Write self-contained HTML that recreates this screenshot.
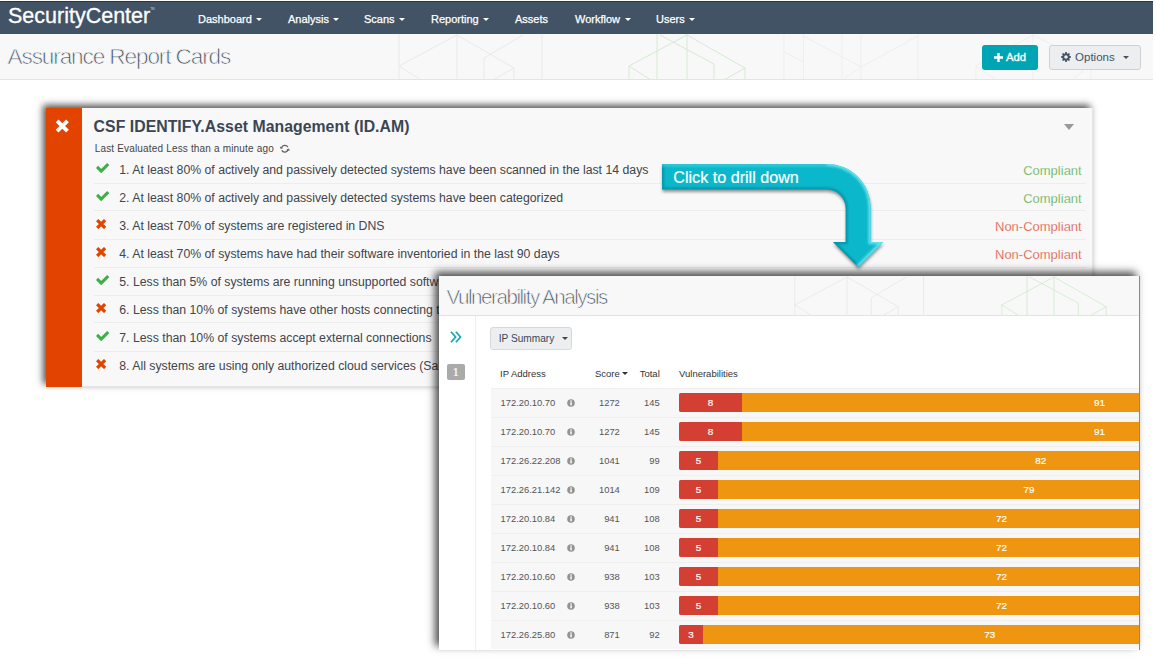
<!DOCTYPE html>
<html><head><meta charset="utf-8"><title>SecurityCenter - Assurance Report Cards</title>
<style>
*{box-sizing:border-box;margin:0;padding:0}
html,body{width:1156px;height:659px;overflow:hidden;background:#fff}
body{position:relative;font-family:"Liberation Sans",Arial,sans-serif;color:#3c4650}
.abs{position:absolute}
#nav{left:0;top:1px;width:1153px;height:33px;background:#425366;border-top:1px solid #2a3644}
#logo{left:8px;top:0.3px;font-size:21.5px;line-height:33px;color:#fff;letter-spacing:0;white-space:nowrap;-webkit-text-stroke:0.3px #fff}
.ni{top:1px;height:33px;line-height:36.2px;font-size:11px;color:#fff;white-space:nowrap;-webkit-text-stroke:0.25px #fff}
.car{display:inline-block;width:0;height:0;border-left:3.2px solid transparent;border-right:3.2px solid transparent;border-top:3.4px solid currentColor;vertical-align:middle;margin-left:4.5px;position:relative;top:-0.5px}
#hdr{left:0;top:34px;width:1153px;height:46px;background:#f8f8f8;border-bottom:1px solid #e4e4e4}
.thin{color:#425363;white-space:nowrap}
#title{left:7.5px;top:34.3px;line-height:45px;font-size:22.6px;-webkit-text-stroke:0.75px #f8f8f8;letter-spacing:-1.12px}
#add{left:982px;top:45px;width:56px;height:25px;background:#00a5b5;border-radius:3px;color:#fff;font-size:11.3px;-webkit-text-stroke:0.35px #fff;line-height:25px;text-align:center}
#opt{left:1049px;top:45px;width:92px;height:25px;background:#eceef0;border:1px solid #cfd2d5;border-radius:3px;color:#425363;font-size:11.5px;line-height:23px;text-align:center;white-space:nowrap}

#card{left:46px;top:108px;width:1047px;height:279px;background:#f8f8f8;box-shadow:-3px -3px 7px rgba(0,0,0,.68);border-right:1px solid #e6e6e6;border-bottom:1px solid #e6e6e6}
#strip{left:46px;top:108px;width:36px;height:279px;background:#e24400}
#ctitle{left:93.6px;top:118.9px;font-size:15.8px;line-height:15.8px;letter-spacing:0.045px;font-weight:bold;color:#3a4654;white-space:nowrap}
#csub{left:94.7px;top:144px;font-size:10px;line-height:10px;letter-spacing:0.17px;color:#444;white-space:nowrap}
.rt{left:119.3px;font-size:12.27px;line-height:12px;color:#41454c;white-space:nowrap}
.st{right:74.3px;font-size:13px;line-height:13px;white-space:nowrap;-webkit-text-stroke:0.25px #f8f8f8}
.ok{color:#4fa83d}.bad{color:#d9442f}
.sep{left:94px;width:992px;height:1px;background:#ededed}

#vp{left:439px;top:276px;width:701px;height:374px;background:#fff;box-shadow:-4px -4px 8px rgba(0,0,0,.7);border-right:1px solid #8a8a8a;overflow:hidden}
#vh{left:0;top:0;width:700px;height:40px;background:#f8f8f8;border-bottom:1px solid #e2e2e2}
#vt{left:7.5px;top:1.1px;font-size:20.6px;line-height:40px;-webkit-text-stroke:0.7px #f8f8f8;letter-spacing:-1.47px}
#vs{left:0;top:40px;width:37px;height:340px;border-right:1px solid #eee;background:#fff}
#ips{left:51px;top:51px;width:82px;height:22.6px;background:#eceef0;border:1px solid #d6d9dc;border-radius:3px;font-size:10.15px;line-height:21.6px;color:#3a4654;padding-left:7.7px;white-space:nowrap}
.th{top:93px;font-size:9.5px;line-height:10px;color:#333;white-space:nowrap}
.vr{left:52px;width:660px;height:29px;background:#f7f7f7;border-top:1px solid #efefef}
.vc{font-size:9.4px;line-height:10px;color:#555;white-space:nowrap}
.bar{left:240px;height:19px;width:480px;background:#ee9611;border-radius:2px 0 0 2px}
.red{left:240px;height:19px;background:#d43f34;border-radius:2px 0 0 2px}
.bn{font-size:9.9px;line-height:10px;color:#fff;-webkit-text-stroke:0.18px #fff;width:20px;margin-left:-10px;text-align:center}
</style></head><body>
<div id="nav" class="abs"></div>
<div id="logo" class="abs">SecurityCenter<span style="font-size:3px;position:relative;top:-13px;letter-spacing:0;-webkit-text-stroke:0;opacity:.7">TM</span></div>
<div class="abs ni" style="left:198px">Dashboard<span class="car"></span></div>
<div class="abs ni" style="left:288px">Analysis<span class="car"></span></div>
<div class="abs ni" style="left:364px">Scans<span class="car"></span></div>
<div class="abs ni" style="left:431px">Reporting<span class="car"></span></div>
<div class="abs ni" style="left:515px">Assets</div>
<div class="abs ni" style="left:575px">Workflow<span class="car"></span></div>
<div class="abs ni" style="left:656px">Users<span class="car"></span></div>
<div id="hdr" class="abs"></div>
<svg class="abs" style="left:0;top:34px" width="1153" height="45" viewBox="0 34 1153 45"><g fill="none" stroke-width="1">
<g stroke="#e9e9e9"><path d="M399 34 V80 M457 34 V80 M484 58 V80 M514 68 V80 M542 34 V80"/><path d="M457 35 L399 66 L421 80 M457 35 L514 68 L493 80 M484 58 L523 35"/></g>
<g stroke="#d3ecd0"><path d="M629 66 V80 M657 34 V80 M687 34 V80 M714 64 V80 M745 68 V80"/><path d="M687 35 L629 66 L651 80 M687 35 L745 68 L724 80 M660 35 L714 64"/></g>
<g stroke="#efefef"><path d="M784 34 V80 M803.5 34 V80 M842 34 V80 M861 34 V80 M918 34 V80 M976 66 V80 M1033 34 V80 M1091 64 V80"/><path d="M784 52 L803.5 62 M803.5 36 L861 67 L842 80 M918 36 L861 67 M1033 35 L976 66 L996 80 M1033 35 L1091 64 L1072 80"/></g>
</g></svg>
<div id="title" class="abs thin">Assurance Report Cards</div>
<div id="add" class="abs"><svg width="9" height="9" viewBox="0 0 9 9" style="vertical-align:-0.8px;margin-right:3px"><path d="M0 4.5 H9 M4.5 0 V9" stroke="#fff" stroke-width="2.4"/></svg>Add</div>
<div id="opt" class="abs"><svg width="10" height="10" viewBox="0 0 10 10" style="vertical-align:-1.2px;margin-right:4px"><path fill-rule="evenodd" fill="#425363" d="M8.59 4.10 L9.94 4.22 L9.94 5.78 L8.59 5.90 L8.17 6.90 L9.05 7.94 L7.94 9.05 L6.90 8.17 L5.90 8.59 L5.78 9.94 L4.22 9.94 L4.10 8.59 L3.10 8.17 L2.06 9.05 L0.95 7.94 L1.83 6.90 L1.41 5.90 L0.06 5.78 L0.06 4.22 L1.41 4.10 L1.83 3.10 L0.95 2.06 L2.06 0.95 L3.10 1.83 L4.10 1.41 L4.22 0.06 L5.78 0.06 L5.90 1.41 L6.90 1.83 L7.94 0.95 L9.05 2.06 L8.17 3.10 Z M5 3.2 A1.8 1.8 0 1 0 5 6.8 A1.8 1.8 0 1 0 5 3.2 Z"/></svg>Options <span class="car" style="margin-left:5px"></span></div>
<div id="card" class="abs"></div>
<div id="strip" class="abs"></div>
<svg class="abs" style="left:55.2px;top:119.3px" width="14.6" height="14" viewBox="0 0 14.6 14"><path d="M2.1 1.9 L12.5 12.1 M12.5 1.9 L2.1 12.1" stroke="#fff" stroke-width="3.9" stroke-linecap="butt"/></svg>
<div id="ctitle" class="abs">CSF IDENTIFY.Asset Management (ID.AM)</div>
<div id="csub" class="abs">Last Evaluated Less than a minute ago</div>
<svg class="abs" style="left:280.3px;top:143.8px" width="9.6" height="9.6" viewBox="0 0 10 10" transform="rotate(-15)"><path d="M8.5 4.2 A3.6 3.6 0 0 0 2 3.2 M1.5 5.8 A3.6 3.6 0 0 0 8 6.8" fill="none" stroke="#606060" stroke-width="1.3"/><path d="M0.6 1.4 L0.8 4.2 L3.6 3.8 Z M9.4 8.6 L9.2 5.8 L6.4 6.2 Z" fill="#606060"/></svg>
<div class="abs" style="left:1064px;top:124px;width:0;height:0;border-left:5px solid transparent;border-right:5px solid transparent;border-top:6px solid #999"></div>
<svg class="abs" style="left:95.5px;top:162.90px" width="13.3" height="10.3" viewBox="0 0 13.3 10.3"><path d="M1.06 3.95 L5.22 8.12 L12.24 1.08" fill="none" stroke="#3fae49" stroke-width="3.05"/></svg>
<div class="abs rt" style="top:163.64px">1. At least 80% of actively and passively detected systems have been scanned in the last 14 days</div>
<div class="abs st ok" style="top:163.80px">Compliant</div>
<div class="abs sep" style="top:182.50px"></div>
<svg class="abs" style="left:95.5px;top:190.90px" width="13.3" height="10.3" viewBox="0 0 13.3 10.3"><path d="M1.06 3.95 L5.22 8.12 L12.24 1.08" fill="none" stroke="#3fae49" stroke-width="3.05"/></svg>
<div class="abs rt" style="top:191.64px">2. At least 80% of actively and passively detected systems have been categorized</div>
<div class="abs st ok" style="top:191.80px">Compliant</div>
<div class="abs sep" style="top:210.10px"></div>
<svg class="abs" style="left:95.5px;top:219.15px" width="10.3" height="10.1" viewBox="0 0 10.3 10.1"><path d="M1.15 1.15 L9.15 8.95 M9.15 1.15 L1.15 8.95" fill="none" stroke="#e24400" stroke-width="3.25"/></svg>
<div class="abs rt" style="top:219.64px">3. At least 70% of systems are registered in DNS</div>
<div class="abs st bad" style="top:219.80px">Non-Compliant</div>
<div class="abs sep" style="top:238.50px"></div>
<svg class="abs" style="left:95.5px;top:247.15px" width="10.3" height="10.1" viewBox="0 0 10.3 10.1"><path d="M1.15 1.15 L9.15 8.95 M9.15 1.15 L1.15 8.95" fill="none" stroke="#e24400" stroke-width="3.25"/></svg>
<div class="abs rt" style="top:247.64px">4. At least 70% of systems have had their software inventoried in the last 90 days</div>
<div class="abs st bad" style="top:247.80px">Non-Compliant</div>
<div class="abs sep" style="top:266.70px"></div>
<svg class="abs" style="left:95.5px;top:274.90px" width="13.3" height="10.3" viewBox="0 0 13.3 10.3"><path d="M1.06 3.95 L5.22 8.12 L12.24 1.08" fill="none" stroke="#3fae49" stroke-width="3.05"/></svg>
<div class="abs rt" style="top:275.64px">5. Less than 5% of systems are running unsupported software</div>
<div class="abs st ok" style="top:275.80px">Compliant</div>
<div class="abs sep" style="top:294.70px"></div>
<svg class="abs" style="left:95.5px;top:303.15px" width="10.3" height="10.1" viewBox="0 0 10.3 10.1"><path d="M1.15 1.15 L9.15 8.95 M9.15 1.15 L1.15 8.95" fill="none" stroke="#e24400" stroke-width="3.25"/></svg>
<div class="abs rt" style="top:303.64px">6. Less than 10% of systems have other hosts connecting to them</div>
<div class="abs st bad" style="top:303.80px">Non-Compliant</div>
<div class="abs sep" style="top:322.10px"></div>
<svg class="abs" style="left:95.5px;top:330.90px" width="13.3" height="10.3" viewBox="0 0 13.3 10.3"><path d="M1.06 3.95 L5.22 8.12 L12.24 1.08" fill="none" stroke="#3fae49" stroke-width="3.05"/></svg>
<div class="abs rt" style="top:331.64px">7. Less than 10% of systems accept external connections</div>
<div class="abs st ok" style="top:331.80px">Compliant</div>
<div class="abs sep" style="top:350.70px"></div>
<svg class="abs" style="left:95.5px;top:359.15px" width="10.3" height="10.1" viewBox="0 0 10.3 10.1"><path d="M1.15 1.15 L9.15 8.95 M9.15 1.15 L1.15 8.95" fill="none" stroke="#e24400" stroke-width="3.25"/></svg>
<div class="abs rt" style="top:359.64px">8. All systems are using only authorized cloud services (Salesforce, Dropbox)</div>
<div class="abs st bad" style="top:359.80px">Non-Compliant</div>
<svg class="abs" style="left:640px;top:150px" width="270" height="130" viewBox="640 150 270 130">
<defs><filter id="as" x="-10%" y="-10%" width="120%" height="130%"><feGaussianBlur stdDeviation="1.4"/></filter>
<filter id="ab" x="-10%" y="-10%" width="120%" height="120%"><feGaussianBlur stdDeviation="0.8"/></filter>
<clipPath id="ac"><path d="M662 164 H827 A43.6 43.6 0 0 1 870.6 207.6 V242 H883 L858 267 L833 242 H845.7 V208.4 A18.8 18.8 0 0 0 827 189.6 H662 Z"/></clipPath></defs>
<path d="M662 164 H827 A43.6 43.6 0 0 1 870.6 207.6 V242 H883 L858 267 L833 242 H845.7 V208.4 A18.8 18.8 0 0 0 827 189.6 H662 Z" transform="translate(0.5,2.5)" fill="rgba(0,0,0,.4)" filter="url(#as)"/>
<path d="M662 164 H827 A43.6 43.6 0 0 1 870.6 207.6 V242 H883 L858 267 L833 242 H845.7 V208.4 A18.8 18.8 0 0 0 827 189.6 H662 Z" fill="#0bb8cb"/>
<g clip-path="url(#ac)" filter="url(#ab)" fill="none">
<path d="M662 164 H827 A43.6 43.6 0 0 1 870.6 207.6 V242 H883 L858 267 L833 242 H845.7 V208.4 A18.8 18.8 0 0 0 827 189.6 H662 Z" stroke="#068fa2" stroke-width="4.5" stroke-opacity=".75"/>
<path d="M662 164 H827 A43.6 43.6 0 0 1 870.6 207.6 V242 H883 L858 267" stroke="#6ff0fa" stroke-width="4.5" stroke-opacity=".85"/>
<path d="M662 164 H827" stroke="#0bb8cb" stroke-width="4" stroke-opacity=".6"/>
</g>
<text x="673.3" y="182.8" font-family="'Liberation Sans',Arial,sans-serif" font-size="17" fill="#fff" stroke="#fff" stroke-width="0.2" textLength="125.5" lengthAdjust="spacingAndGlyphs">Click to drill down</text>
</svg>
<div id="vp" class="abs">
<div id="vh" class="abs"></div>
<svg class="abs" style="left:0;top:0" width="700" height="40" viewBox="0 0 700 40"><g transform="translate(-3.3,-30.5) scale(0.9)"><g fill="none" stroke-width="1">
<g stroke="#e9e9e9"><path d="M399 34 V80 M457 34 V80 M484 58 V80 M514 68 V80 M542 34 V80"/><path d="M457 35 L399 66 L421 80 M457 35 L514 68 L493 80 M484 58 L523 35"/></g>
<g stroke="#d3ecd0"><path d="M629 66 V80 M657 34 V80 M687 34 V80 M714 64 V80 M745 68 V80"/><path d="M687 35 L629 66 L651 80 M687 35 L745 68 L724 80 M660 35 L714 64"/></g>
<g stroke="#efefef"><path d="M784 34 V80 M803.5 34 V80 M842 34 V80 M861 34 V80 M918 34 V80 M976 66 V80 M1033 34 V80 M1091 64 V80"/><path d="M784 52 L803.5 62 M803.5 36 L861 67 L842 80 M918 36 L861 67 M1033 35 L976 66 L996 80 M1033 35 L1091 64 L1072 80"/></g>
</g></g></svg>
<div id="vt" class="abs thin">Vulnerability Analysis</div>
<div id="vs" class="abs"></div>
<svg class="abs" style="left:10.8px;top:55px" width="12" height="12" viewBox="0 0 12 12"><path d="M1 0.7 L5.6 6 L1 11.3 M5.9 0.7 L10.5 6 L5.9 11.3" fill="none" stroke="#14a5b8" stroke-width="1.7"/></svg>
<div class="abs" style="left:8px;top:88px;width:17.5px;height:16px;background:#aaa;border-radius:2px;color:#fff;font-family:'Liberation Serif',serif;font-size:12px;line-height:16.5px;text-align:center;-webkit-text-stroke:0.2px #fff">1</div>
<div id="ips" class="abs">IP Summary<span class="car" style="margin-left:7.5px;border-left-width:3px;border-right-width:3px;border-top-width:3.5px;top:-0.5px"></span></div>
<div class="abs th" style="left:61px">IP Address</div>
<div class="abs th" style="left:156px">Score<span class="car" style="margin-left:2px;border-left-width:3px;border-right-width:3px;border-top-width:3.5px;top:-0.5px"></span></div>
<div class="abs th" style="left:200.7px">Total</div>
<div class="abs th" style="left:240px">Vulnerabilities</div>
<div class="abs vr" style="top:111.50px"></div><div class="abs vc" style="left:61.5px;top:121.80px">172.20.10.70</div><svg class="abs" style="left:127.8px;top:122.50px" width="8" height="8" viewBox="0 0 8 8"><circle cx="4" cy="4" r="3.8" fill="#939393"/><rect x="3.3" y="3.3" width="1.5" height="3" fill="#fff"/><rect x="3.3" y="1.4" width="1.5" height="1.3" fill="#fff"/></svg><div class="abs vc" style="right:519.2px;top:121.80px">1272</div><div class="abs vc" style="right:479.4px;top:121.80px">145</div><div class="abs bar" style="top:117.00px"></div><div class="abs red" style="top:117.00px;width:63px"></div><div class="abs bn" style="left:271.5px;top:121.70px">8</div><div class="abs bn" style="left:660.4px;top:121.70px">91</div>
<div class="abs vr" style="top:140.50px"></div><div class="abs vc" style="left:61.5px;top:150.80px">172.20.10.70</div><svg class="abs" style="left:127.8px;top:151.50px" width="8" height="8" viewBox="0 0 8 8"><circle cx="4" cy="4" r="3.8" fill="#939393"/><rect x="3.3" y="3.3" width="1.5" height="3" fill="#fff"/><rect x="3.3" y="1.4" width="1.5" height="1.3" fill="#fff"/></svg><div class="abs vc" style="right:519.2px;top:150.80px">1272</div><div class="abs vc" style="right:479.4px;top:150.80px">145</div><div class="abs bar" style="top:146.00px"></div><div class="abs red" style="top:146.00px;width:63px"></div><div class="abs bn" style="left:271.5px;top:150.70px">8</div><div class="abs bn" style="left:660.4px;top:150.70px">91</div>
<div class="abs vr" style="top:169.50px"></div><div class="abs vc" style="left:61.5px;top:179.80px">172.26.22.208</div><svg class="abs" style="left:127.8px;top:180.50px" width="8" height="8" viewBox="0 0 8 8"><circle cx="4" cy="4" r="3.8" fill="#939393"/><rect x="3.3" y="3.3" width="1.5" height="3" fill="#fff"/><rect x="3.3" y="1.4" width="1.5" height="1.3" fill="#fff"/></svg><div class="abs vc" style="right:519.2px;top:179.80px">1041</div><div class="abs vc" style="right:479.4px;top:179.80px">99</div><div class="abs bar" style="top:175.00px"></div><div class="abs red" style="top:175.00px;width:39px"></div><div class="abs bn" style="left:259.5px;top:179.70px">5</div><div class="abs bn" style="left:601.8px;top:179.70px">82</div>
<div class="abs vr" style="top:198.50px"></div><div class="abs vc" style="left:61.5px;top:208.80px">172.26.21.142</div><svg class="abs" style="left:127.8px;top:209.50px" width="8" height="8" viewBox="0 0 8 8"><circle cx="4" cy="4" r="3.8" fill="#939393"/><rect x="3.3" y="3.3" width="1.5" height="3" fill="#fff"/><rect x="3.3" y="1.4" width="1.5" height="1.3" fill="#fff"/></svg><div class="abs vc" style="right:519.2px;top:208.80px">1014</div><div class="abs vc" style="right:479.4px;top:208.80px">109</div><div class="abs bar" style="top:204.00px"></div><div class="abs red" style="top:204.00px;width:39px"></div><div class="abs bn" style="left:259.5px;top:208.70px">5</div><div class="abs bn" style="left:590.0px;top:208.70px">79</div>
<div class="abs vr" style="top:227.50px"></div><div class="abs vc" style="left:61.5px;top:237.80px">172.20.10.84</div><svg class="abs" style="left:127.8px;top:238.50px" width="8" height="8" viewBox="0 0 8 8"><circle cx="4" cy="4" r="3.8" fill="#939393"/><rect x="3.3" y="3.3" width="1.5" height="3" fill="#fff"/><rect x="3.3" y="1.4" width="1.5" height="1.3" fill="#fff"/></svg><div class="abs vc" style="right:519.2px;top:237.80px">941</div><div class="abs vc" style="right:479.4px;top:237.80px">108</div><div class="abs bar" style="top:233.00px"></div><div class="abs red" style="top:233.00px;width:39px"></div><div class="abs bn" style="left:259.5px;top:237.70px">5</div><div class="abs bn" style="left:562.5px;top:237.70px">72</div>
<div class="abs vr" style="top:256.50px"></div><div class="abs vc" style="left:61.5px;top:266.80px">172.20.10.84</div><svg class="abs" style="left:127.8px;top:267.50px" width="8" height="8" viewBox="0 0 8 8"><circle cx="4" cy="4" r="3.8" fill="#939393"/><rect x="3.3" y="3.3" width="1.5" height="3" fill="#fff"/><rect x="3.3" y="1.4" width="1.5" height="1.3" fill="#fff"/></svg><div class="abs vc" style="right:519.2px;top:266.80px">941</div><div class="abs vc" style="right:479.4px;top:266.80px">108</div><div class="abs bar" style="top:262.00px"></div><div class="abs red" style="top:262.00px;width:39px"></div><div class="abs bn" style="left:259.5px;top:266.70px">5</div><div class="abs bn" style="left:562.5px;top:266.70px">72</div>
<div class="abs vr" style="top:285.50px"></div><div class="abs vc" style="left:61.5px;top:295.80px">172.20.10.60</div><svg class="abs" style="left:127.8px;top:296.50px" width="8" height="8" viewBox="0 0 8 8"><circle cx="4" cy="4" r="3.8" fill="#939393"/><rect x="3.3" y="3.3" width="1.5" height="3" fill="#fff"/><rect x="3.3" y="1.4" width="1.5" height="1.3" fill="#fff"/></svg><div class="abs vc" style="right:519.2px;top:295.80px">938</div><div class="abs vc" style="right:479.4px;top:295.80px">103</div><div class="abs bar" style="top:291.00px"></div><div class="abs red" style="top:291.00px;width:39px"></div><div class="abs bn" style="left:259.5px;top:295.70px">5</div><div class="abs bn" style="left:562.5px;top:295.70px">72</div>
<div class="abs vr" style="top:314.50px"></div><div class="abs vc" style="left:61.5px;top:324.80px">172.20.10.60</div><svg class="abs" style="left:127.8px;top:325.50px" width="8" height="8" viewBox="0 0 8 8"><circle cx="4" cy="4" r="3.8" fill="#939393"/><rect x="3.3" y="3.3" width="1.5" height="3" fill="#fff"/><rect x="3.3" y="1.4" width="1.5" height="1.3" fill="#fff"/></svg><div class="abs vc" style="right:519.2px;top:324.80px">938</div><div class="abs vc" style="right:479.4px;top:324.80px">103</div><div class="abs bar" style="top:320.00px"></div><div class="abs red" style="top:320.00px;width:39px"></div><div class="abs bn" style="left:259.5px;top:324.70px">5</div><div class="abs bn" style="left:562.5px;top:324.70px">72</div>
<div class="abs vr" style="top:343.50px"></div><div class="abs vc" style="left:61.5px;top:353.80px">172.26.25.80</div><svg class="abs" style="left:127.8px;top:354.50px" width="8" height="8" viewBox="0 0 8 8"><circle cx="4" cy="4" r="3.8" fill="#939393"/><rect x="3.3" y="3.3" width="1.5" height="3" fill="#fff"/><rect x="3.3" y="1.4" width="1.5" height="1.3" fill="#fff"/></svg><div class="abs vc" style="right:519.2px;top:353.80px">871</div><div class="abs vc" style="right:479.4px;top:353.80px">92</div><div class="abs bar" style="top:349.00px"></div><div class="abs red" style="top:349.00px;width:24px"></div><div class="abs bn" style="left:252.0px;top:353.70px">3</div><div class="abs bn" style="left:550.7px;top:353.70px">73</div>
</div>
</body></html>
